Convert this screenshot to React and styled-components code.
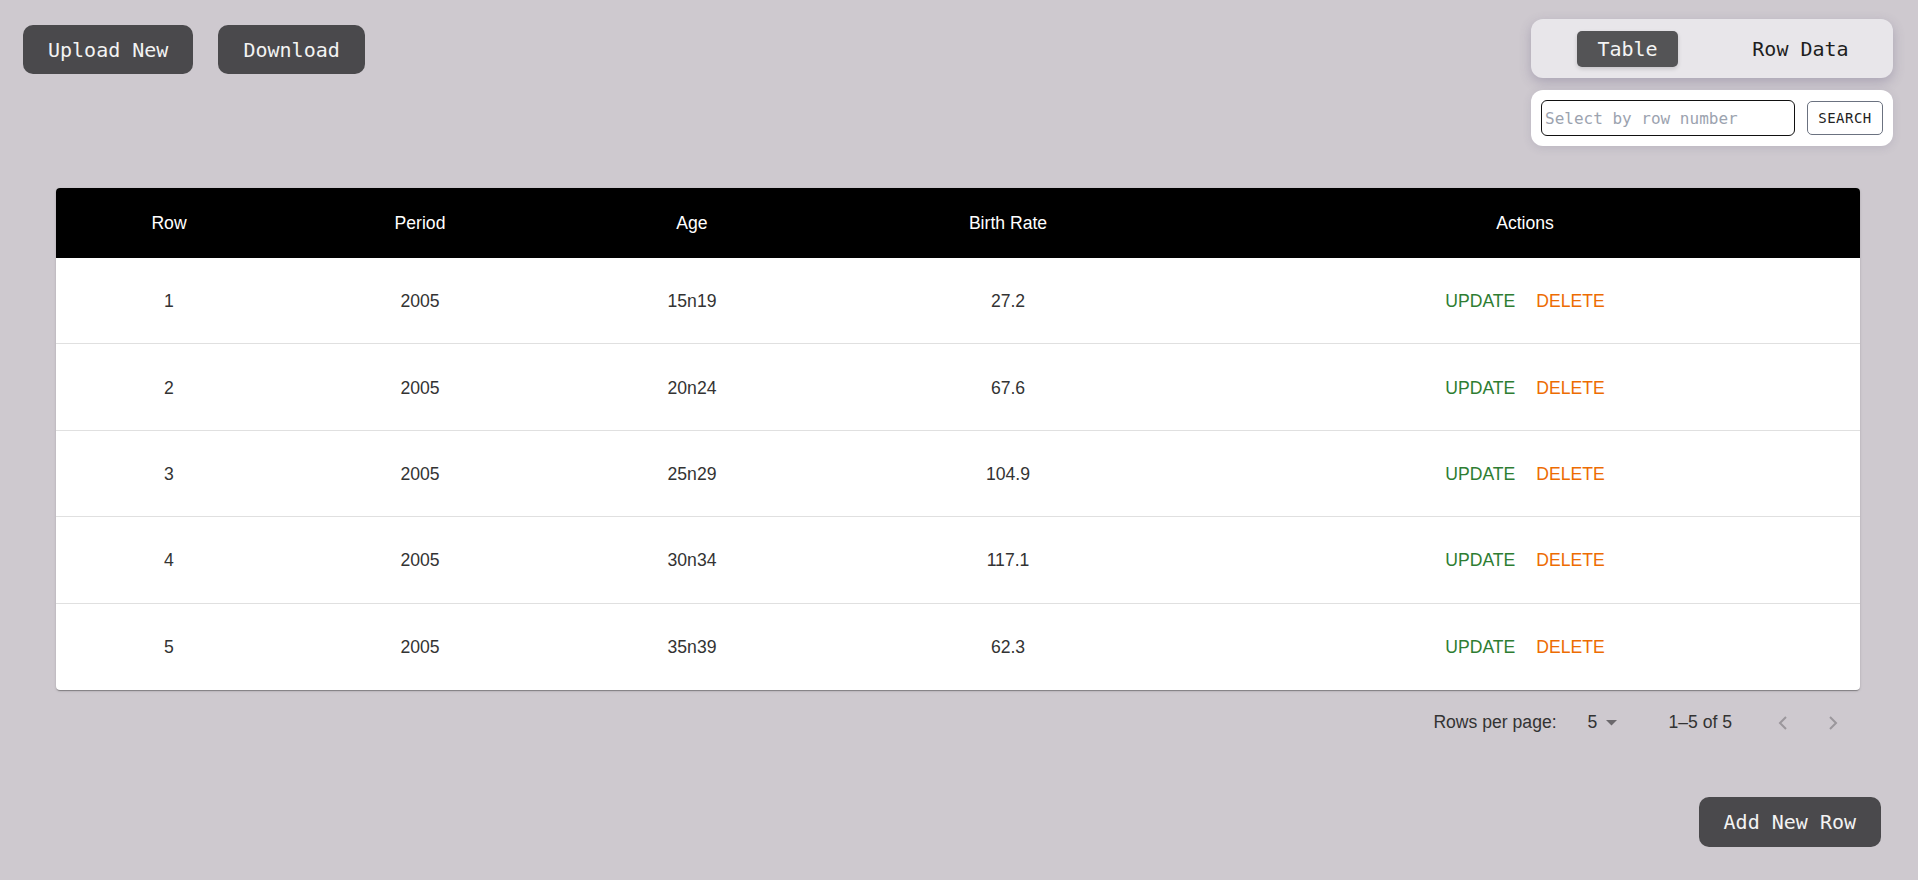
import React from 'react';
import styled, { createGlobalStyle } from 'styled-components';

const GlobalStyle = createGlobalStyle`
  html, body { margin: 0; padding: 0; background: #cec9cf; }
  body { font-family: "Liberation Sans", Arial, sans-serif; }
  * { box-sizing: border-box; }
`;

const MONO = '"DejaVu Sans Mono", "Liberation Mono", monospace';

const Page = styled.div`
  min-height: 880px;
  padding: 19px 25px 0 23px;
  display: flex;
  flex-direction: column;
`;

const TopBar = styled.div`
  display: flex;
  justify-content: space-between;
  align-items: flex-start;
`;

const ButtonGroup = styled.div`
  display: flex;
  gap: 25px;
  margin-top: 6px;
`;

const DarkButton = styled.button`
  height: ${p => (p.$tall ? 50 : 49)}px;
  padding: 0 25px;
  border: none;
  border-radius: 10px;
  background: #4a494c;
  color: #f3f3f3;
  font-family: ${MONO};
  font-size: 20px;
  cursor: pointer;
  white-space: nowrap;
`;

const RightPanel = styled.div`
  width: 362px;
  display: flex;
  flex-direction: column;
  gap: 12px;
`;

const ViewToggle = styled.div`
  height: 59px;
  padding: 0 6px 0 10px;
  display: grid;
  grid-template-columns: 1fr 1fr;
  align-items: center;
  background: #e8e6ea;
  border-radius: 12px;
  box-shadow: 0 4px 12px rgba(90, 80, 120, 0.3);
`;

const ToggleOption = styled.button`
  justify-self: center;
  height: 36px;
  padding: 0 20px;
  border: none;
  border-radius: 5px;
  background: ${p => (p.$active ? '#545456' : 'transparent')};
  color: ${p => (p.$active ? '#f4f4f4' : '#1e1e1e')};
  box-shadow: ${p => (p.$active ? '0 2px 4px rgba(0,0,0,0.15)' : 'none')};
  font-family: ${MONO};
  font-size: 20px;
  cursor: pointer;
`;

const SearchPanel = styled.div`
  height: 56px;
  padding: 0 10px;
  display: flex;
  align-items: center;
  gap: 12px;
  background: #ffffff;
  border-radius: 12px;
  box-shadow: 0 2px 8px rgba(90, 80, 120, 0.15);
`;

const SearchInput = styled.input`
  width: 254px;
  height: 36px;
  padding: 0 3px;
  border: 1px solid #111;
  border-radius: 6px;
  font-family: ${MONO};
  font-size: 16px;
  color: #222;
  outline: none;
  &::placeholder { color: #9ca3af; }
`;

const SearchButton = styled.button`
  width: 76px;
  height: 34px;
  padding: 0;
  border: 1px solid #6b7280;
  border-radius: 5px;
  background: #fff;
  color: #222;
  font-family: ${MONO};
  font-size: 14px;
  letter-spacing: 0.5px;
  cursor: pointer;
`;

const TableCard = styled.div`
  margin: 42px 33px 0 33px;
  background: #fff;
  border-radius: 4px;
  overflow: hidden;
  box-shadow: 0 2px 1px -1px rgba(0,0,0,0.2), 0 1px 1px 0 rgba(0,0,0,0.14), 0 1px 3px 0 rgba(0,0,0,0.12);
`;

const Table = styled.table`
  width: 100%;
  border-collapse: separate;
  border-spacing: 0;
  table-layout: fixed;
`;

const HeadCell = styled.th`
  height: 70px;
  padding: 0;
  background: #000;
  color: #fff;
  font-size: 17.6px;
  font-weight: 400;
  text-align: center;
`;

const BodyRow = styled.tr`
  &:last-child td { border-bottom: none; }
`;

const Cell = styled.td`
  height: 86.4px;
  padding: 2px 0 0;
  border-bottom: 1px solid #e0e0e0;
  color: #333;
  font-size: 17.6px;
  text-align: center;
`;

const Actions = styled.div`
  display: inline-flex;
  gap: 21px;
`;

const ActionButton = styled.button`
  padding: 0;
  border: none;
  background: none;
  color: ${p => p.$color};
  font-family: "Liberation Sans", Arial, sans-serif;
  font-size: 17.6px;
  text-transform: uppercase;
  cursor: pointer;
`;

const Pagination = styled.div`
  height: 64px;
  margin: 0 33px;
  padding: 2px 7px 0 0;
  display: flex;
  justify-content: flex-end;
  align-items: center;
  color: #333;
  font-size: 17.6px;
`;

const PerPage = styled.div`
  margin-left: 31px;
  display: flex;
  align-items: center;
  gap: 9px;
`;

const Displayed = styled.span`
  margin-left: 51px;
`;

const PageButton = styled.button`
  width: 40px;
  height: 40px;
  margin-left: ${p => p.$gap}px;
  padding: 0;
  border: none;
  background: none;
  display: flex;
  align-items: center;
  justify-content: center;
  color: #9b979c;
`;

const AddRow = styled.div`
  margin-top: 43px;
  margin-right: 12px;
  display: flex;
  justify-content: flex-end;
`;

const rows = [
  { row: 1, period: 2005, age: '15n19', rate: '27.2' },
  { row: 2, period: 2005, age: '20n24', rate: '67.6' },
  { row: 3, period: 2005, age: '25n29', rate: '104.9' },
  { row: 4, period: 2005, age: '30n34', rate: '117.1' },
  { row: 5, period: 2005, age: '35n39', rate: '62.3' },
];

const Chevron = ({ dir }) => (
  <svg width="12" height="16" viewBox="0 0 12 16">
    <polyline
      points={dir === 'left' ? '9,2 3,8 9,14' : '3,2 9,8 3,14'}
      fill="none"
      stroke="currentColor"
      strokeWidth="2"
    />
  </svg>
);

export default function App() {
  return (
    <>
      <GlobalStyle />
      <Page>
        <TopBar>
          <ButtonGroup>
            <DarkButton>Upload New</DarkButton>
            <DarkButton>Download</DarkButton>
          </ButtonGroup>
          <RightPanel>
            <ViewToggle>
              <ToggleOption $active>Table</ToggleOption>
              <ToggleOption>Row Data</ToggleOption>
            </ViewToggle>
            <SearchPanel>
              <SearchInput placeholder="Select by row number" />
              <SearchButton>SEARCH</SearchButton>
            </SearchPanel>
          </RightPanel>
        </TopBar>

        <TableCard>
          <Table>
            <colgroup>
              <col style={{ width: '226px' }} />
              <col style={{ width: '276px' }} />
              <col style={{ width: '268px' }} />
              <col style={{ width: '364px' }} />
              <col />
            </colgroup>
            <thead>
              <tr>
                <HeadCell>Row</HeadCell>
                <HeadCell>Period</HeadCell>
                <HeadCell>Age</HeadCell>
                <HeadCell>Birth Rate</HeadCell>
                <HeadCell>Actions</HeadCell>
              </tr>
            </thead>
            <tbody>
              {rows.map(r => (
                <BodyRow key={r.row}>
                  <Cell>{r.row}</Cell>
                  <Cell>{r.period}</Cell>
                  <Cell>{r.age}</Cell>
                  <Cell>{r.rate}</Cell>
                  <Cell>
                    <Actions>
                      <ActionButton $color="#2e7d32">Update</ActionButton>
                      <ActionButton $color="#ed6c02">Delete</ActionButton>
                    </Actions>
                  </Cell>
                </BodyRow>
              ))}
            </tbody>
          </Table>
        </TableCard>

        <Pagination>
          <span>Rows per page:</span>
          <PerPage>
            <span>5</span>
            <svg width="11" height="6" viewBox="0 0 11 6">
              <polygon points="0,0 11,0 5.5,5.5" fill="#6b686c" />
            </svg>
          </PerPage>
          <Displayed>1–5 of 5</Displayed>
          <PageButton $gap={31}><Chevron dir="left" /></PageButton>
          <PageButton $gap={10}><Chevron dir="right" /></PageButton>
        </Pagination>

        <AddRow>
          <DarkButton $tall>Add New Row</DarkButton>
        </AddRow>
      </Page>
    </>
  );
}
